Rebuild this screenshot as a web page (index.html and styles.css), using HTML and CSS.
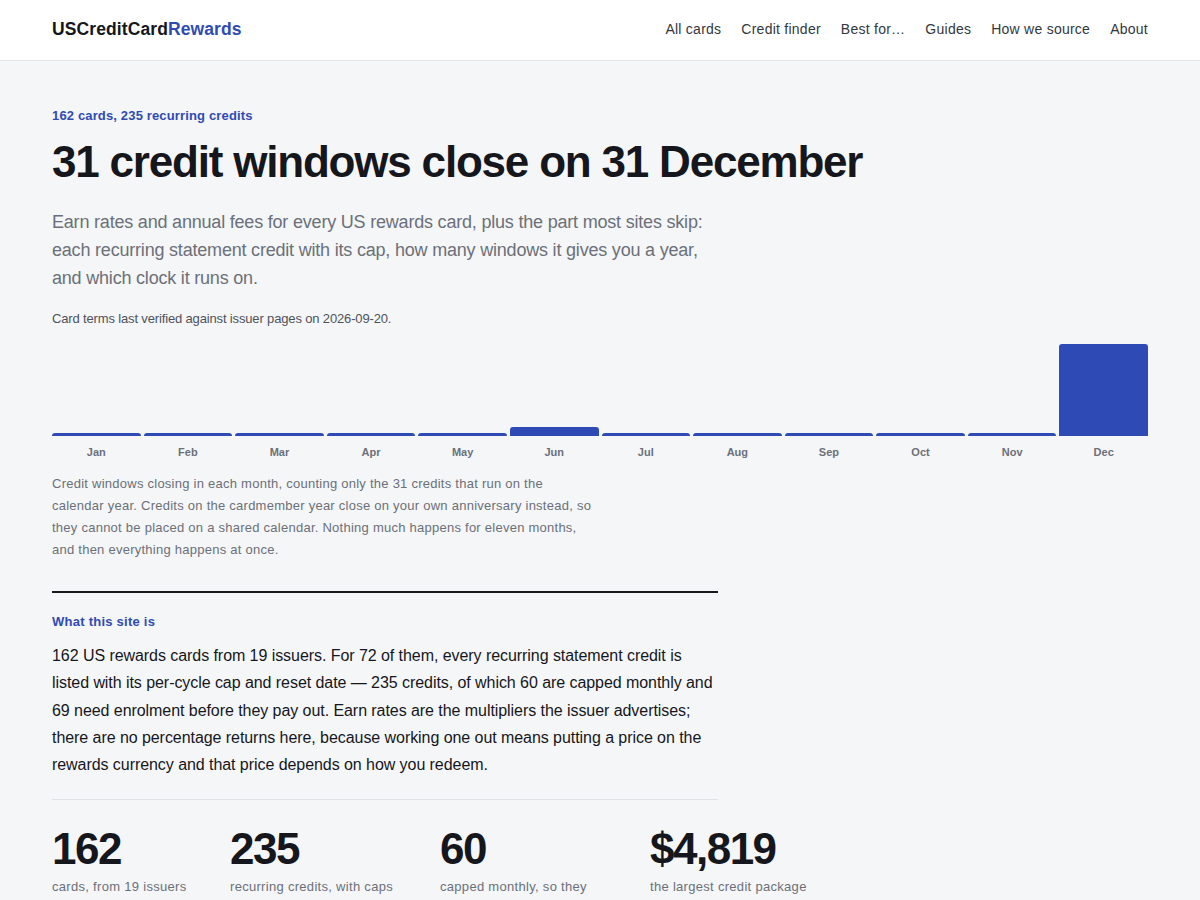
FILE: index.html
```html
<!DOCTYPE html>
<html lang="en">
<head>
<meta charset="utf-8">
<title>USCreditCardRewards</title>
<link rel="stylesheet" href="styles.css">
</head>
<body>
<header class="site-header">
  <div class="header-inner">
    <a class="logo" href="#">USCreditCard<span class="logo-accent">Rewards</span></a>
    <nav class="nav">
      <a href="#">All cards</a>
      <a href="#">Credit finder</a>
      <a href="#">Best for…</a>
      <a href="#">Guides</a>
      <a href="#">How we source</a>
      <a href="#">About</a>
    </nav>
  </div>
</header>
<main class="main">
  <p class="eyebrow">162 cards, 235 recurring credits</p>
  <h1 class="title">31 credit windows close on 31 December</h1>
  <p class="lead">Earn rates and annual fees for every US rewards card, plus the part most sites skip: each recurring statement credit with its cap, how many windows it gives you a year, and which clock it runs on.</p>
  <p class="verified">Card terms last verified against issuer pages on 2026-09-20.</p>

  <div class="chart">
    <div class="col"><div class="bar-area"><div class="bar" style="height:3px"></div></div><span class="month">Jan</span></div>
    <div class="col"><div class="bar-area"><div class="bar" style="height:3px"></div></div><span class="month">Feb</span></div>
    <div class="col"><div class="bar-area"><div class="bar" style="height:3px"></div></div><span class="month">Mar</span></div>
    <div class="col"><div class="bar-area"><div class="bar" style="height:3px"></div></div><span class="month">Apr</span></div>
    <div class="col"><div class="bar-area"><div class="bar" style="height:3px"></div></div><span class="month">May</span></div>
    <div class="col"><div class="bar-area"><div class="bar" style="height:9px"></div></div><span class="month">Jun</span></div>
    <div class="col"><div class="bar-area"><div class="bar" style="height:3px"></div></div><span class="month">Jul</span></div>
    <div class="col"><div class="bar-area"><div class="bar" style="height:3px"></div></div><span class="month">Aug</span></div>
    <div class="col"><div class="bar-area"><div class="bar" style="height:3px"></div></div><span class="month">Sep</span></div>
    <div class="col"><div class="bar-area"><div class="bar" style="height:3px"></div></div><span class="month">Oct</span></div>
    <div class="col"><div class="bar-area"><div class="bar" style="height:3px"></div></div><span class="month">Nov</span></div>
    <div class="col"><div class="bar-area"><div class="bar" style="height:92px"></div></div><span class="month">Dec</span></div>
  </div>
  <p class="caption">Credit windows closing in each month, counting only the 31 credits that run on the calendar year. Credits on the cardmember year close on your own anniversary instead, so they cannot be placed on a shared calendar. Nothing much happens for eleven months, and then everything happens at once.</p>

  <section class="about">
    <h2 class="section-label">What this site is</h2>
    <p class="about-text">162 US rewards cards from 19 issuers. For 72 of them, every recurring statement credit is listed with its per-cycle cap and reset date — 235 credits, of which 60 are capped monthly and 69 need enrolment before they pay out. Earn rates are the multipliers the issuer advertises; there are no percentage returns here, because working one out means putting a price on the rewards currency and that price depends on how you redeem.</p>
  </section>

  <div class="stats">
    <div class="stat stat-first"><div class="stat-num">162</div><div class="stat-label">cards, from 19 issuers</div></div>
    <div class="stat"><div class="stat-num">235</div><div class="stat-label">recurring credits, with caps</div></div>
    <div class="stat"><div class="stat-num">60</div><div class="stat-label">capped monthly, so they reset each month</div></div>
    <div class="stat"><div class="stat-num">$4,819</div><div class="stat-label">the largest credit package on one card</div></div>
  </div>
</main>
</body>
</html>
```
FILE: styles.css
```css
* { box-sizing: border-box; }
html, body { margin: 0; padding: 0; }
body {
  background: #f5f6f8;
  color: #15171c;
  font-family: "Liberation Sans", Arial, sans-serif;
}
a { text-decoration: none; color: inherit; }

.site-header {
  background: #ffffff;
  border-bottom: 1px solid #e2e4e8;
  height: 61px;
}
.header-inner {
  max-width: 1200px;
  padding: 0 52px;
  height: 58px;
  display: flex;
  align-items: center;
  justify-content: space-between;
}
.logo {
  font-size: 17.5px;
  font-weight: 700;
  letter-spacing: 0.1px;
  color: #15171c;
}
.logo-accent { color: #2f4bb3; }
.nav {
  display: flex;
  gap: 20px;
}
.nav a {
  font-size: 14px;
  color: #33373f;
  letter-spacing: 0.25px;
}

.main {
  padding: 46px 52px 0;
}
.eyebrow {
  margin: 0;
  font-size: 13px;
  font-weight: 700;
  color: #2f4bb3;
  letter-spacing: 0.15px;
  line-height: 18px;
}
.title {
  margin: 10px 0 0;
  font-size: 44px;
  line-height: 54px;
  font-weight: 700;
  letter-spacing: -1.2px;
  color: #15171c;
}
.lead {
  margin: 19px 0 0;
  max-width: 668px;
  font-size: 18px;
  line-height: 28px;
  color: #6b7079;
  letter-spacing: -0.2px;
}
.verified {
  margin: 18px 0 0;
  font-size: 13px;
  line-height: 18px;
  color: #4d525b;
  letter-spacing: -0.15px;
}

.chart {
  margin-top: 16px;
  display: grid;
  grid-template-columns: repeat(12, 1fr);
  gap: 3px;
}
.col {
  display: flex;
  flex-direction: column;
  align-items: stretch;
}
.bar-area {
  height: 92px;
  display: flex;
  align-items: flex-end;
}
.bar {
  width: 100%;
  background: #2e4bb5;
  border-radius: 3px 3px 0 0;
}
.month {
  margin-top: 9px;
  text-align: center;
  font-size: 11px;
  font-weight: 700;
  color: #6b7079;
  line-height: 14px;
}
.caption {
  margin: 14px 0 0;
  max-width: 540px;
  font-size: 13px;
  line-height: 22px;
  color: #6b7079;
  letter-spacing: 0.25px;
}

.about {
  margin-top: 30px;
  max-width: 666px;
  border-top: 2px solid #15171c;
  border-bottom: 1px solid #dfe1e6;
  padding: 20px 0 21px;
}
.section-label {
  margin: 0;
  font-size: 13px;
  font-weight: 700;
  color: #2f4bb3;
  line-height: 18px;
  letter-spacing: 0.25px;
}
.about-text {
  margin: 11px 0 0;
  max-width: 664px;
  font-size: 16px;
  line-height: 27.3px;
  color: #15171c;
  letter-spacing: -0.06px;
}

.stats {
  margin-top: 26px;
  display: flex;
  gap: 40px;
}
.stat {
  flex: 0 0 170px;
}
.stat-first {
  flex: 0 0 auto;
  min-width: 138px;
}
.stat-num {
  font-size: 44px;
  font-weight: 700;
  line-height: 46px;
  letter-spacing: -1.5px;
  color: #15171c;
}
.stat-label {
  margin-top: 5px;
  font-size: 13px;
  line-height: 20px;
  color: #6b7079;
  letter-spacing: 0.3px;
}
```
